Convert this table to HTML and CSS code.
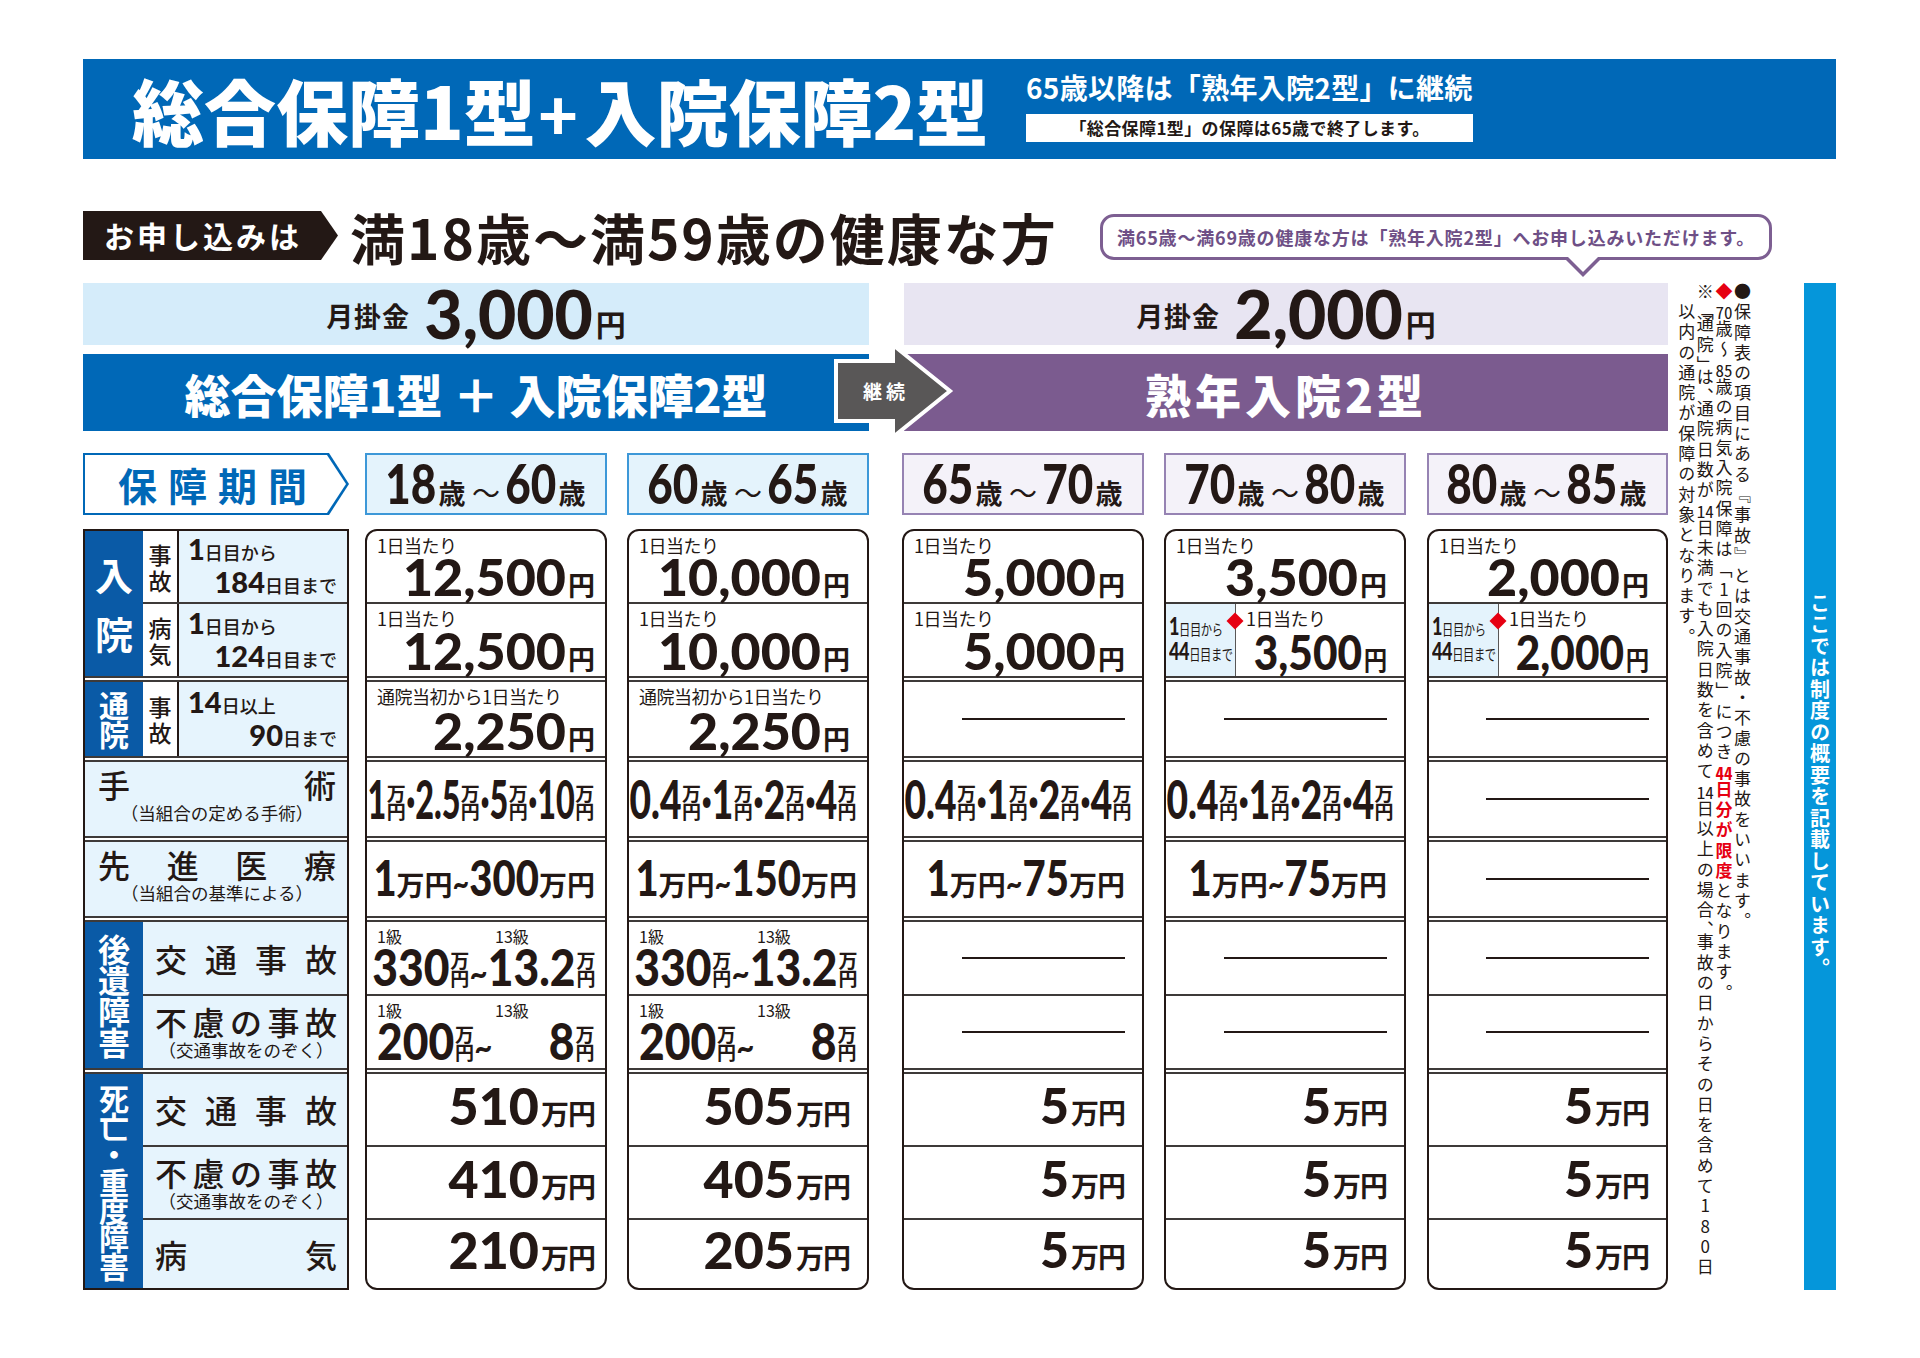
FILE: index.html
```html
<!DOCTYPE html>
<html lang="ja">
<head>
<meta charset="utf-8">
<title>総合保障1型＋入院保障2型</title>
<link rel="stylesheet" href="styles.css">
</head>
<body>
<div class="page">
  <header class="banner">
    <h1 class="banner-title">総合保障1型<span class="plus">+</span>入院保障2型</h1>
    <div class="banner-side">
      <p class="banner-sub">65歳以降は「熟年入院2型」に継続</p>
      <p class="banner-note">「総合保障1型」の保障は65歳で終了します。</p>
    </div>
  </header>

  <section class="apply">
    <div class="apply-tag">お申し込みは</div>
    <div class="apply-text">満18歳～満59歳の健康な方</div>
    <div class="bubble">満65歳～満69歳の健康な方は「熟年入院2型」へお申し込みいただけます。</div>
  </section>

  <div class="main">
    <div class="plans">
      <div class="price-row">
        <div class="price price-a"><span class="price-lab">月掛金</span><span class="price-amt">3,000</span><span class="price-yen">円</span></div>
        <div class="price price-b"><span class="price-lab">月掛金</span><span class="price-amt">2,000</span><span class="price-yen">円</span></div>
      </div>

      <div class="bar-row">
        <div class="bar bar-a">総合保障1型 ＋ 入院保障2型</div>
        <div class="bar bar-b">熟年入院2型</div>
        <svg class="cont-arrow" viewBox="0 0 120 98" width="120" height="98">
          <polygon points="2,18 59,18 59,2 116,48 59,94 59,78 2,78" fill="#595757" stroke="#ffffff" stroke-width="4" stroke-linejoin="miter"/>
          <text x="52" y="56" fill="#ffffff" font-size="19" font-weight="700" text-anchor="middle" letter-spacing="4" font-family="Noto Sans CJK JP, sans-serif">継続</text>
        </svg>
      </div>

      <div class="head-row">
        <div class="period"><div class="period-in">保障期間</div></div>
        <div class="age age-a c1"><span class="age-in"><span class="dg">18</span><span class="unit sai"><span>歳</span></span><span class="unit til"><span>～</span></span><span class="dg">60</span><span class="unit sai"><span>歳</span></span></span></div>
        <div class="age age-a c2"><span class="age-in"><span class="dg">60</span><span class="unit sai"><span>歳</span></span><span class="unit til"><span>～</span></span><span class="dg">65</span><span class="unit sai"><span>歳</span></span></span></div>
        <div class="age age-b c3"><span class="age-in"><span class="dg">65</span><span class="unit sai"><span>歳</span></span><span class="unit til"><span>～</span></span><span class="dg">70</span><span class="unit sai"><span>歳</span></span></span></div>
        <div class="age age-b c4"><span class="age-in"><span class="dg">70</span><span class="unit sai"><span>歳</span></span><span class="unit til"><span>～</span></span><span class="dg">80</span><span class="unit sai"><span>歳</span></span></span></div>
        <div class="age age-b c5"><span class="age-in"><span class="dg">80</span><span class="unit sai"><span>歳</span></span><span class="unit til"><span>～</span></span><span class="dg">85</span><span class="unit sai"><span>歳</span></span></span></div>
      </div>

      <div class="table-row">
        <!-- label column -->
        <div class="lab">
          <div class="grp">
            <div class="cat cat-nyu"><span>入</span><span>院</span></div>
            <div class="subs">
              <div class="sub hA"><div class="kind"><span>事</span><span>故</span></div><div class="lv"><p class="lv-1"><b>1</b>日目から</p><p class="lv-2"><b>184</b>日目まで</p></div></div>
              <div class="s1"></div>
              <div class="sub hB"><div class="kind"><span>病</span><span>気</span></div><div class="lv"><p class="lv-1"><b>1</b>日目から</p><p class="lv-2"><b>124</b>日目まで</p></div></div>
            </div>
          </div>
          <div class="s2"></div>
          <div class="grp hC">
            <div class="cat cat-tsu"><span>通</span><span>院</span></div>
            <div class="sub sub-fill"><div class="kind"><span>事</span><span>故</span></div><div class="lv"><p class="lv-1"><b>14</b>日以上</p><p class="lv-2"><b>90</b>日まで</p></div></div>
          </div>
          <div class="s2"></div>
          <div class="wide hC"><p class="wide-main"><span>手</span><span>術</span></p><p class="wide-note">（当組合の定める手術）</p></div>
          <div class="s2"></div>
          <div class="wide hC"><p class="wide-main"><span>先</span><span>進</span><span>医</span><span>療</span></p><p class="wide-note">（当組合の基準による）</p></div>
          <div class="s2"></div>
          <div class="grp">
            <div class="cat cat-kou"><span>後</span><span>遺</span><span>障</span><span>害</span></div>
            <div class="subs">
              <div class="sub2 hB"><p class="wide-main"><span>交</span><span>通</span><span>事</span><span>故</span></p></div>
              <div class="s1"></div>
              <div class="sub2 hB"><p class="wide-main"><span>不</span><span>慮</span><span>の</span><span>事</span><span>故</span></p><p class="wide-note">（交通事故をのぞく）</p></div>
            </div>
          </div>
          <div class="s2"></div>
          <div class="grp">
            <div class="cat cat-shi"><span>死</span><span>亡</span><span>・</span><span>重</span><span>度</span><span>障</span><span>害</span></div>
            <div class="subs">
              <div class="sub2 hE"><p class="wide-main"><span>交</span><span>通</span><span>事</span><span>故</span></p></div>
              <div class="s1"></div>
              <div class="sub2 hE"><p class="wide-main"><span>不</span><span>慮</span><span>の</span><span>事</span><span>故</span></p><p class="wide-note">（交通事故をのぞく）</p></div>
              <div class="s1"></div>
              <div class="sub2 hD"><p class="wide-main"><span>病</span><span>気</span></p></div>
            </div>
          </div>
        </div>

        <!-- 18-60 -->
        <div class="val c1">
          <div class="cell hA day"><p class="cap">1日当たり</p><p class="amt">12,500<span class="yen">円</span></p></div>
          <div class="s1"></div>
          <div class="cell hB day"><p class="cap">1日当たり</p><p class="amt">12,500<span class="yen">円</span></p></div>
          <div class="s2"></div>
          <div class="cell hC day"><p class="cap">通院当初から1日当たり</p><p class="amt">2,250<span class="yen">円</span></p></div>
          <div class="s2"></div>
          <div class="cell hC fit"><p class="cond surg surg-w">1<span class="unit stk"><span>万<br>円</span></span>·2.5<span class="unit stk"><span>万<br>円</span></span>·5<span class="unit stk"><span>万<br>円</span></span>·10<span class="unit stk"><span>万<br>円</span></span></p></div>
          <div class="s2"></div>
          <div class="cell hC fit"><p class="cond adv">1<span class="unit mn"><span>万円</span></span><span class="tl">~</span>300<span class="unit mn"><span>万円</span></span></p></div>
          <div class="s2"></div>
          <div class="cell hB grade"><p class="gcap"><span>1級</span><span>13級</span></p><p class="cond gr">330<span class="unit stk"><span>万<br>円</span></span><span class="tl">~</span>13.2<span class="unit stk"><span>万<br>円</span></span></p></div>
          <div class="s1"></div>
          <div class="cell hB grade"><p class="gcap"><span>1級</span><span>13級</span></p><div class="grow"><p class="cond gr gl">200<span class="unit stk"><span>万<br>円</span></span><span class="tl">~</span></p><p class="cond gr">8<span class="unit stk"><span>万<br>円</span></span></p></div></div>
          <div class="s2"></div>
          <div class="cell hE big"><p class="amt">510<span class="man">万円</span></p></div>
          <div class="s1"></div>
          <div class="cell hE big"><p class="amt">410<span class="man">万円</span></p></div>
          <div class="s1"></div>
          <div class="cell hD big"><p class="amt">210<span class="man">万円</span></p></div>
        </div>

        <!-- 60-65 -->
        <div class="val c2">
          <div class="cell hA day"><p class="cap">1日当たり</p><p class="amt">10,000<span class="yen">円</span></p></div>
          <div class="s1"></div>
          <div class="cell hB day"><p class="cap">1日当たり</p><p class="amt">10,000<span class="yen">円</span></p></div>
          <div class="s2"></div>
          <div class="cell hC day"><p class="cap">通院当初から1日当たり</p><p class="amt">2,250<span class="yen">円</span></p></div>
          <div class="s2"></div>
          <div class="cell hC fit"><p class="cond surg">0.4<span class="unit stk"><span>万<br>円</span></span>·1<span class="unit stk"><span>万<br>円</span></span>·2<span class="unit stk"><span>万<br>円</span></span>·4<span class="unit stk"><span>万<br>円</span></span></p></div>
          <div class="s2"></div>
          <div class="cell hC fit"><p class="cond adv">1<span class="unit mn"><span>万円</span></span><span class="tl">~</span>150<span class="unit mn"><span>万円</span></span></p></div>
          <div class="s2"></div>
          <div class="cell hB grade"><p class="gcap"><span>1級</span><span>13級</span></p><p class="cond gr">330<span class="unit stk"><span>万<br>円</span></span><span class="tl">~</span>13.2<span class="unit stk"><span>万<br>円</span></span></p></div>
          <div class="s1"></div>
          <div class="cell hB grade"><p class="gcap"><span>1級</span><span>13級</span></p><div class="grow"><p class="cond gr gl">200<span class="unit stk"><span>万<br>円</span></span><span class="tl">~</span></p><p class="cond gr">8<span class="unit stk"><span>万<br>円</span></span></p></div></div>
          <div class="s2"></div>
          <div class="cell hE big"><p class="amt">505<span class="man">万円</span></p></div>
          <div class="s1"></div>
          <div class="cell hE big"><p class="amt">405<span class="man">万円</span></p></div>
          <div class="s1"></div>
          <div class="cell hD big"><p class="amt">205<span class="man">万円</span></p></div>
        </div>

        <!-- 65-70 -->
        <div class="val c3">
          <div class="cell hA day"><p class="cap">1日当たり</p><p class="amt">5,000<span class="yen">円</span></p></div>
          <div class="s1"></div>
          <div class="cell hB day"><p class="cap">1日当たり</p><p class="amt">5,000<span class="yen">円</span></p></div>
          <div class="s2"></div>
          <div class="cell hC dash"></div>
          <div class="s2"></div>
          <div class="cell hC fit"><p class="cond surg">0.4<span class="unit stk"><span>万<br>円</span></span>·1<span class="unit stk"><span>万<br>円</span></span>·2<span class="unit stk"><span>万<br>円</span></span>·4<span class="unit stk"><span>万<br>円</span></span></p></div>
          <div class="s2"></div>
          <div class="cell hC fit fit-r"><p class="cond adv">1<span class="unit mn"><span>万円</span></span><span class="tl">~</span>75<span class="unit mn"><span>万円</span></span></p></div>
          <div class="s2"></div>
          <div class="cell hB dash"></div>
          <div class="s1"></div>
          <div class="cell hB dash"></div>
          <div class="s2"></div>
          <div class="cell hE big five"><p class="amt">5<span class="man">万円</span></p></div>
          <div class="s1"></div>
          <div class="cell hE big five"><p class="amt">5<span class="man">万円</span></p></div>
          <div class="s1"></div>
          <div class="cell hD big five"><p class="amt">5<span class="man">万円</span></p></div>
        </div>

        <!-- 70-80 -->
        <div class="val c4">
          <div class="cell hA day"><p class="cap">1日当たり</p><p class="amt">3,500<span class="yen">円</span></p></div>
          <div class="s1"></div>
          <div class="cell hB split">
            <div class="split-l"><p class="sl"><b>1</b>日目から</p><p class="sl"><b>44</b>日目まで</p></div>
            <div class="split-r"><p class="cap">1日当たり</p><p class="amt amt-s">3,500<span class="yen">円</span></p></div>
            <span class="diamond"></span>
          </div>
          <div class="s2"></div>
          <div class="cell hC dash"></div>
          <div class="s2"></div>
          <div class="cell hC fit"><p class="cond surg">0.4<span class="unit stk"><span>万<br>円</span></span>·1<span class="unit stk"><span>万<br>円</span></span>·2<span class="unit stk"><span>万<br>円</span></span>·4<span class="unit stk"><span>万<br>円</span></span></p></div>
          <div class="s2"></div>
          <div class="cell hC fit fit-r"><p class="cond adv">1<span class="unit mn"><span>万円</span></span><span class="tl">~</span>75<span class="unit mn"><span>万円</span></span></p></div>
          <div class="s2"></div>
          <div class="cell hB dash"></div>
          <div class="s1"></div>
          <div class="cell hB dash"></div>
          <div class="s2"></div>
          <div class="cell hE big five"><p class="amt">5<span class="man">万円</span></p></div>
          <div class="s1"></div>
          <div class="cell hE big five"><p class="amt">5<span class="man">万円</span></p></div>
          <div class="s1"></div>
          <div class="cell hD big five"><p class="amt">5<span class="man">万円</span></p></div>
        </div>

        <!-- 80-85 -->
        <div class="val c5">
          <div class="cell hA day"><p class="cap">1日当たり</p><p class="amt">2,000<span class="yen">円</span></p></div>
          <div class="s1"></div>
          <div class="cell hB split">
            <div class="split-l"><p class="sl"><b>1</b>日目から</p><p class="sl"><b>44</b>日目まで</p></div>
            <div class="split-r"><p class="cap">1日当たり</p><p class="amt amt-s">2,000<span class="yen">円</span></p></div>
            <span class="diamond"></span>
          </div>
          <div class="s2"></div>
          <div class="cell hC dash"></div>
          <div class="s2"></div>
          <div class="cell hC dash"></div>
          <div class="s2"></div>
          <div class="cell hC dash"></div>
          <div class="s2"></div>
          <div class="cell hB dash"></div>
          <div class="s1"></div>
          <div class="cell hB dash"></div>
          <div class="s2"></div>
          <div class="cell hE big five"><p class="amt">5<span class="man">万円</span></p></div>
          <div class="s1"></div>
          <div class="cell hE big five"><p class="amt">5<span class="man">万円</span></p></div>
          <div class="s1"></div>
          <div class="cell hD big five"><p class="amt">5<span class="man">万円</span></p></div>
        </div>
      </div>
    </div>

    <div class="notes">
      <p>●保障表の項目にある『事故』とは交通事故・不慮の事故をいいます。</p>
      <p><span class="red">◆</span><span class="tcy">70</span>歳～<span class="tcy">85</span>歳の病気入院保障は「<span class="up">1</span>回の入院」につき<strong class="red"><span class="tcy">44</span>日分が限度</strong>となります。</p>
      <p>※<span class="pk">「</span>通院<span class="pk">」</span>は<span class="pk">、</span>通院日数が<span class="tcy">14</span>日未満でも入院日数を含めて<span class="tcy">14</span>日以上の場合<span class="pk">、</span>事故の日からその日を含めて<span class="up">180</span>日</p>
      <p class="indent">以内の通院が保障の対象となります。</p>
    </div>
    <div class="side-bar">ここでは制度の概要を記載しています。</div>
  </div>
</div>
</body>
</html>
```

FILE: styles.css
```css
* { box-sizing: border-box; margin: 0; padding: 0; }
html, body { background: #ffffff; }
body {
  font-family: "Noto Sans CJK JP", "Noto Sans", sans-serif;
  color: #231815;
}
.page { width: 1920px; height: 1358px; padding: 59px 0 0 83px; overflow: hidden; }

/* ---------- banner ---------- */
.banner { width: 1753px; height: 100px; background: #0068b7; display: flex; padding-left: 49px; }
.banner-title {
  width: 894px; color: #fff; font-size: 72px; font-weight: 900; line-height: 100px;
  letter-spacing: 0; white-space: nowrap;
}
.plus { font-family: Lato, "Noto Sans", sans-serif; font-weight: 900; font-size: 70px; margin: 0 6px 0 2px; }
.banner-side { padding-top: 14px; }
.banner-sub { color: #fff; font-size: 28px; font-weight: 700; line-height: 28px; white-space: nowrap; letter-spacing: 0.3px; }
.banner-note {
  margin-top: 13px; width: 447px; height: 28px; background: #fff;
  font-size: 17px; font-weight: 700; line-height: 28px; text-align: center; white-space: nowrap; letter-spacing: 0.4px;
}

/* ---------- apply row ---------- */
.apply { display: flex; align-items: flex-end; height: 49px; margin-top: 52px; }
.apply-tag {
  flex: none; width: 255px; height: 49px; background: #231815;
  clip-path: polygon(0 0, 238px 0, 255px 50%, 238px 100%, 0 100%);
  color: #fff; font-size: 30px; font-weight: 700; line-height: 49px;
  padding-left: 21px; letter-spacing: 3px; white-space: nowrap;
}
.apply-text {
  flex: none; width: 750px; margin-left: 12px; align-self: center;
  font-size: 55px; font-weight: 700; line-height: 54px; letter-spacing: 2px; white-space: nowrap;
}
.bubble {
  flex: none; position: relative; width: 672px; height: 46px;
  border: 3px solid #7d5f92; border-radius: 14px; background: #fff;
  color: #6e4f86; font-size: 18px; font-weight: 700; line-height: 40px;
  text-align: center; white-space: nowrap; letter-spacing: 0.8px;
}
.bubble::before {
  content: ""; position: absolute; left: 460px; top: 100%;
  border-left: 20px solid transparent; border-right: 20px solid transparent;
  border-top: 20px solid #7d5f92;
}
.bubble::after {
  content: ""; position: absolute; left: 464px; top: calc(100% - 1px);
  border-left: 16px solid transparent; border-right: 16px solid transparent;
  border-top: 16px solid #fff;
}

/* ---------- main ---------- */
.main { display: flex; margin-top: 23px; }
.plans { flex: none; width: 1586px; }

.price-row { display: flex; height: 62px; }
.price { display: flex; align-items: flex-end; justify-content: center; padding-bottom: 6px; }
.price-a { width: 786px; background: #d5ecfa; }
.price-b { width: 764px; margin-left: 35px; background: #e8e5f2; }
.price-lab { font-size: 27px; font-weight: 700; line-height: 27px; margin: 0 14px 10px 0; letter-spacing: 1px; }
.price-amt { font-family: Lato, "Noto Sans", sans-serif; font-weight: 900; font-size: 66px; line-height: 51px; }
.price-yen { font-size: 30px; font-weight: 700; line-height: 30px; margin: 0 0 1px 3px; }

.bar-row { display: flex; height: 77px; margin-top: 9px; position: relative; }
.bar { display: flex; align-items: center; justify-content: center; color: #fff; font-size: 46px; font-weight: 900; white-space: nowrap; }
.bar-a { width: 786px; background: #0068b7; }
.bar-b { width: 764px; margin-left: 35px; background: #7b5b8f; letter-spacing: 4px; }
.cont-arrow { position: absolute; left: 751px; top: -11px; }

/* ---------- header row ---------- */
.head-row { display: flex; height: 62px; margin-top: 22px; }
.period {
  flex: none; width: 266px; height: 62px; background: #0068b7; padding: 2px 0 2px 2px;
  clip-path: polygon(0 0, 246px 0, 266px 50%, 246px 100%, 0 100%);
}
.period-in {
  height: 100%; background: #fff; color: #0068b7;
  clip-path: polygon(0 0, 242px 0, 261px 50%, 242px 100%, 0 100%);
  font-size: 39px; font-weight: 700; line-height: 58px; padding-left: 33px; letter-spacing: 11px; white-space: nowrap;
}
.c1 { margin-left: 16px; }
.c2 { margin-left: 20px; }
.c3 { margin-left: 33px; }
.c4 { margin-left: 20px; }
.c5 { margin-left: 21px; }
.age {
  flex: none; width: 242px; height: 62px; white-space: nowrap;
  display: flex; justify-content: center; align-items: flex-start;
}
.c5.age, .c5.val { width: 241px; }
.age-a { background: #e4f3fc; border: 2px solid #3d98d8; }
.age-b { background: #f4f2f9; border: 2px solid #9683b3; }
.age-in { flex: none; display: block; line-height: 57px; --k: .8; transform: scaleX(var(--k)); }
.dg { font-family: Lato, "Noto Sans", sans-serif; font-weight: 900; font-size: 55px; }
.unit { display: inline-block; width: calc(var(--uw) / var(--k)); text-align: center; }
.unit > span { display: inline-block; transform: scaleX(calc(1 / var(--k))); }
.sai { --uw: 31px; font-size: 27px; font-weight: 700; }
.til { --uw: 38px; font-size: 28px; font-weight: 400; }

/* ---------- table ---------- */
.table-row { display: flex; margin-top: 14px; height: 761px; }
.hA { height: 71px; flex: none; }
.hB { height: 72px; flex: none; }
.hC { height: 74px; flex: none; }
.hE { height: 71px; flex: none; }
.hD { height: 68px; flex: none; }
.s1 { flex: none; height: 2px; background: #3e3a39; }
.s2 { flex: none; height: 6px; border-top: 2px solid #3e3a39; border-bottom: 2px solid #3e3a39; background: #fff; }

.lab {
  flex: none; width: 266px; border: 2px solid #231815; background: #e6f4fd;
  display: flex; flex-direction: column;
}
.grp { display: flex; flex: none; }
.cat {
  flex: none; width: 58px; background: #0a5aa6; color: #fff; font-weight: 700;
  display: flex; flex-direction: column; align-items: center; justify-content: center;
}
.cat-nyu { font-size: 38px; line-height: 38px; gap: 21px; }
.cat-tsu { font-size: 30px; line-height: 29px; }
.cat-kou { font-size: 32px; line-height: 31px; }
.cat-shi { font-size: 30px; line-height: 28px; }
.subs { flex: 1; display: flex; flex-direction: column; }
.sub { display: flex; }
.sub-fill { flex: 1; }
.kind {
  flex: none; width: 36px; background: #fff; border-right: 2px solid #231815;
  font-size: 23px; line-height: 26px; font-weight: 500;
  display: flex; flex-direction: column; align-items: center; justify-content: center;
}
.lv { flex: 1; display: flex; flex-direction: column; justify-content: center; padding: 1px 10px 0 9px; font-size: 18px; font-weight: 500; white-space: nowrap; }
.lv b { font-family: Lato, "Noto Sans", sans-serif; font-weight: 900; font-size: 29px; }
.lv-1 { line-height: 29px; }
.lv-2 { line-height: 29px; text-align: right; }

.wide { display: flex; flex-direction: column; justify-content: flex-start; padding: 5px 11px 0 13px; }
.sub2 { display: flex; flex-direction: column; justify-content: center; padding: 0 10px 0 12px; }
.wide-main { display: flex; justify-content: space-between; font-size: 32px; line-height: 35px; font-weight: 500; }
.wide-note { text-align: center; font-size: 17.5px; line-height: 21px; white-space: nowrap; letter-spacing: 0; margin: 0 -6px; }

.val {
  flex: none; width: 242px; border: 2px solid #231815; border-radius: 12px; overflow: hidden; background: #fff;
  display: flex; flex-direction: column; --pr: 17px;
}
.val.c1 { --pr: 10px; }
.cell { flex: none; display: flex; flex-direction: column; padding: 0 var(--pr) 0 10px; position: relative; }

.day { padding-top: 3px; padding-bottom: 6px; }
.cap { font-size: 18px; line-height: 22px; letter-spacing: -0.5px; white-space: nowrap; }
.amt {
  margin-top: auto; align-self: flex-end; white-space: nowrap;
  font-family: Lato, "Noto Sans", sans-serif; font-weight: 900; font-size: 52px; line-height: 40px;
}
.yen { font-family: "Noto Sans CJK JP", sans-serif; font-size: 27px; font-weight: 700; line-height: 0; margin-left: 2px; }
.man { font-family: "Noto Sans CJK JP", sans-serif; font-size: 28px; font-weight: 700; line-height: 0; margin-left: 2px; letter-spacing: -1px; }

.big { justify-content: center; align-items: flex-end; padding-bottom: 10px; }
.big .amt { margin-top: 0; }
.five .amt { font-size: 50px; }

.fit { justify-content: center; align-items: flex-end; padding-right: 10px; }
.fit-r { padding-right: var(--pr); }
.cond {
  display: inline-block; white-space: nowrap; transform: scaleX(var(--k)); transform-origin: right center;
  font-family: Lato, "Noto Sans", sans-serif; font-weight: 900;
}
.surg { --k: .7; font-size: 53px; line-height: 42px; }
.surg-w { --k: .61; }
.adv { --k: .8; font-size: 50px; line-height: 40px; }
.gr { --k: .87; font-size: 51px; line-height: 36px; }
.gl { transform-origin: left center; }
.stk { --uw: 20px; font-family: "Noto Sans CJK JP", sans-serif; font-size: 19px; line-height: 18px; font-weight: 700; }
.mn { --uw: 56px; font-family: "Noto Sans CJK JP", sans-serif; font-size: 28px; font-weight: 700; line-height: 0; }
.tl { font-size: 36px; font-weight: 700; }

.grade { padding: 5px 10px 0 10px; justify-content: flex-start; }
.gcap { display: flex; font-size: 16px; line-height: 18px; white-space: nowrap; }
.gcap span:first-child { width: 118px; }
.grade > .cond { align-self: flex-end; margin-top: 4px; }
.grow { display: flex; justify-content: space-between; margin-top: 4px; }

.dash { justify-content: center; align-items: flex-end; }
.dash::after { content: ""; width: 163px; height: 2px; background: #231815; }

.split { flex-direction: row; padding: 0; }
.split-l {
  flex: none; width: 70px; padding-left: 3px; background: #e4f3fc; border-right: 1.5px solid #595757;
  display: flex; flex-direction: column; justify-content: center; overflow: hidden;
}
.sl { font-size: 15px; line-height: 22px; transform: scaleX(.75); transform-origin: left center; white-space: nowrap; letter-spacing: -0.5px; }
.sl b { font-family: Lato, "Noto Sans", sans-serif; font-weight: 900; font-size: 24px; }
.split-r { flex: 1; min-width: 0; display: flex; flex-direction: column; padding: 3px var(--pr) 6px 10px; }
.amt-s { font-size: 47px; line-height: 36px; transform: scaleX(.9); transform-origin: right center; }
.amt-s .yen { font-size: 26px; }
.diamond {
  position: absolute; left: 63px; top: 11px; width: 12px; height: 12px; background: #e60012;
  transform: rotate(45deg);
}

/* ---------- notes ---------- */
.notes {
  flex: none; width: 76px; height: 1007px; margin-left: 6px;
  writing-mode: vertical-rl; font-size: 17px; font-weight: 400; line-height: 18.6px; letter-spacing: 3.3px; white-space: nowrap;
}
.notes .indent { padding-top: 20.3px; }
.tcy { text-combine-upright: all; letter-spacing: 0; }
.up { text-orientation: upright; }
.pk { letter-spacing: -5px; }
.red { color: #e60012; }
.notes strong { font-weight: 700; }
.side-bar {
  flex: none; width: 32px; height: 1007px; margin-left: 53px; background: #0596da; color: #fff;
  writing-mode: vertical-rl; display: flex; align-items: center; justify-content: center;
  font-size: 20px; font-weight: 700; letter-spacing: 1.5px;
}
```
